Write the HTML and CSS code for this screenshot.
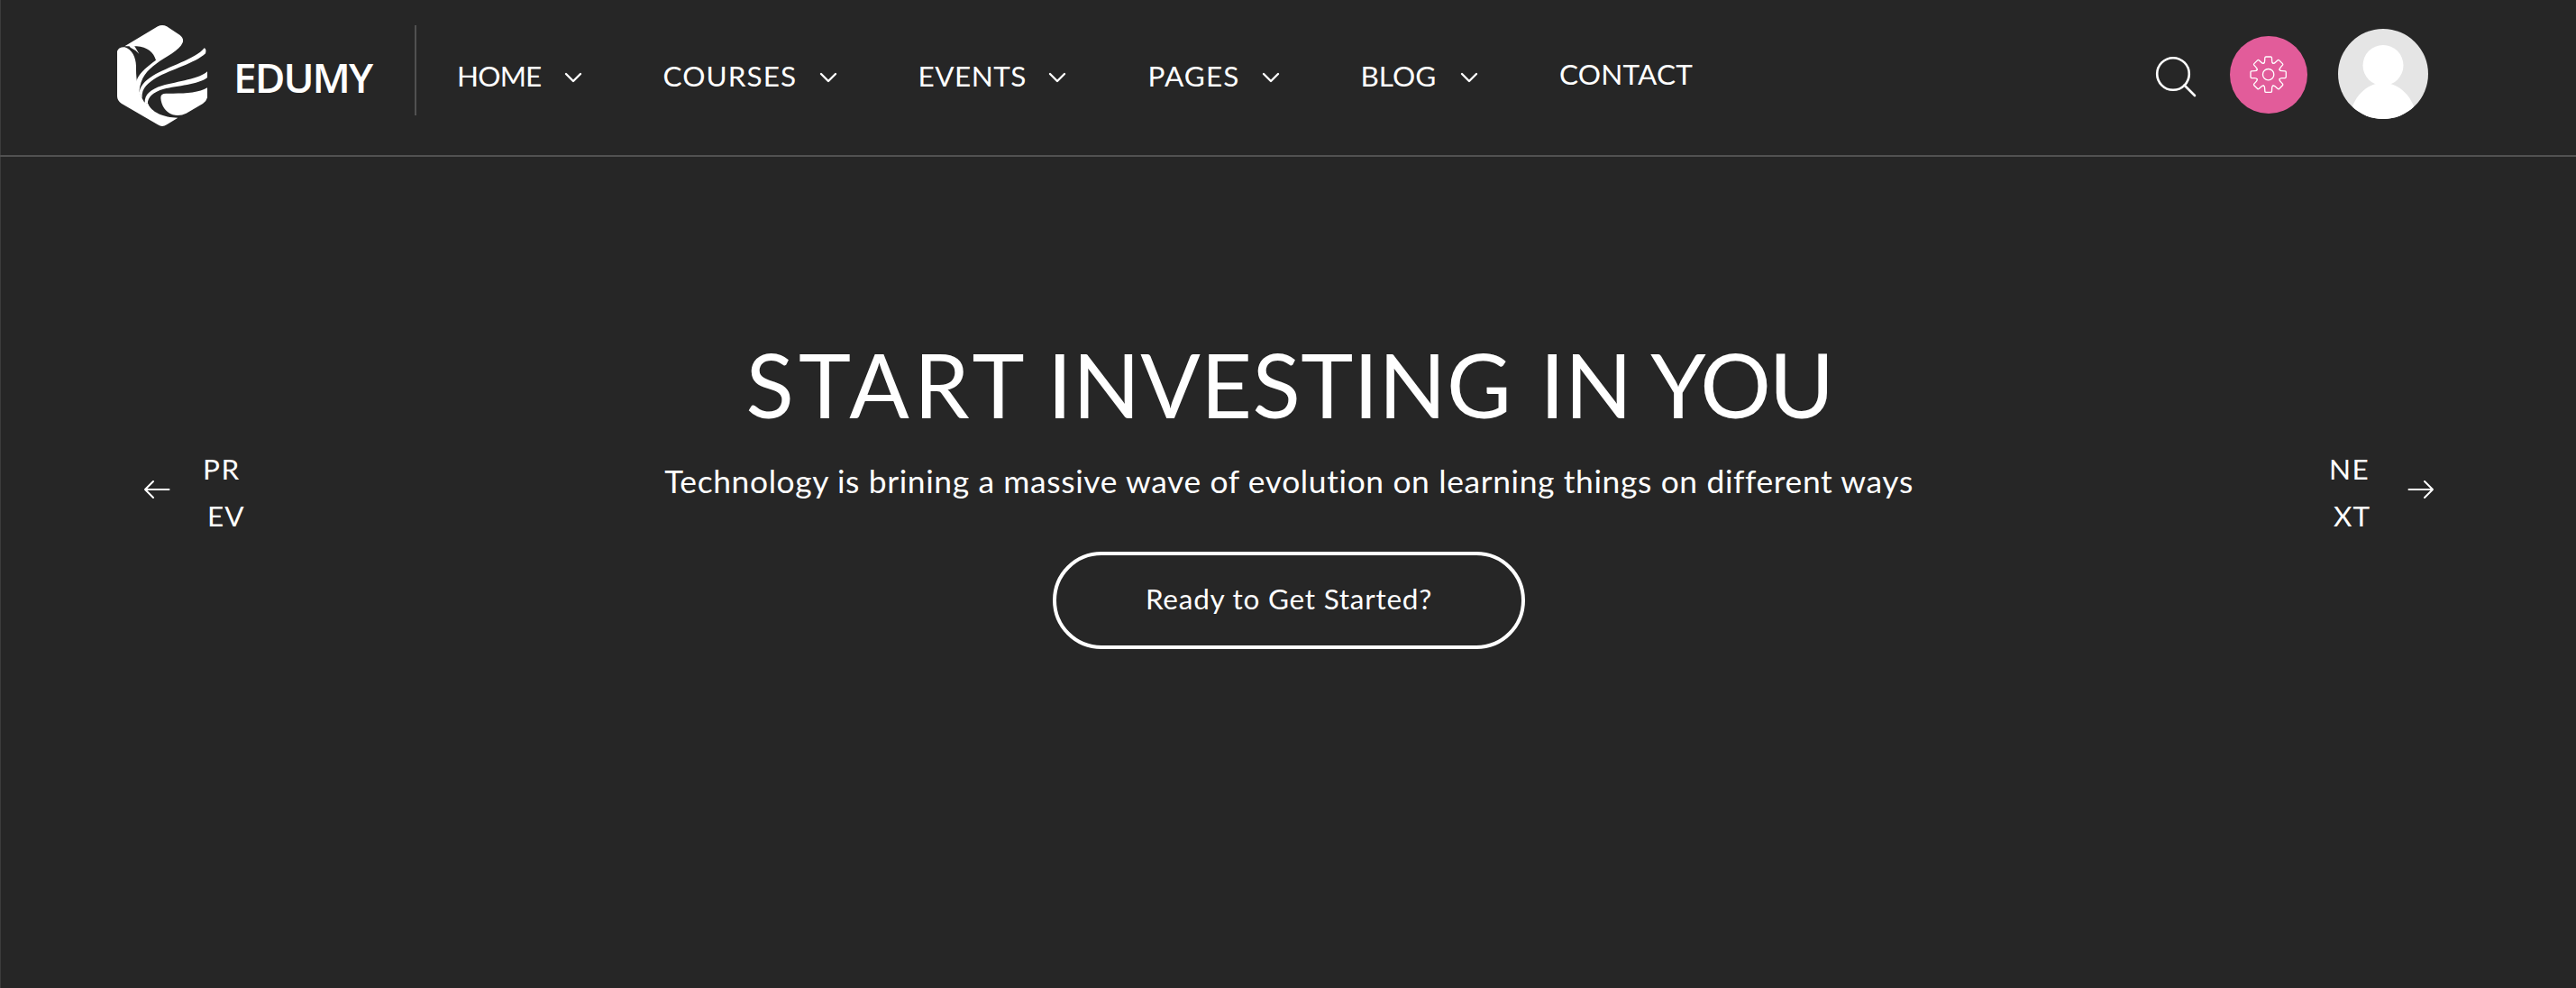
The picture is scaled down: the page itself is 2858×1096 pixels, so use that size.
FILE: index.html
```
<!DOCTYPE html>
<html lang="en">
<head>
<meta charset="utf-8">
<title>Edumy</title>
<link rel="stylesheet" href="styles.css">
</head>
<body>
<svg class="defs" aria-hidden="true">
  <symbol id="chevron" viewBox="0 0 20 12"><path d="M2 2l8 8 8-8"/></symbol>
  <symbol id="arrow" viewBox="0 0 30 22"><path d="M28.500 11H2M11 2l-9 9 9 9"/></symbol>
</svg>
<header class="header">
  <a class="brand">
    <svg class="logo" viewBox="60 54 300 336">
      <path d="M85 124L195 58Q210 50 225 58L268 86Q283 97 278 112C268 138 220 160 190 182C160 204 138 226 133 276C124 262 122 245 127 232C136 210 165 188 189 170C182 146 160 125 125 124Z"/>
      <path d="M60 140Q66 126 85 127C110 135 122 160 123 190C122 240 130 276 150 310L163 315C172 342 215 362 262 362L225 385Q210 395 195 385L75 315Q60 305 60 290Z"/>
      <path d="M350 130C325 164 225 194 180 221C152 239 134 257 134 280L143 296C140 262 165 245 190 229C240 201 320 180 354 148Q358 133 350 130Z"/>
      <path d="M360 208C335 232 262 241 210 255C170 267 151 285 152 312L162 315C160 295 180 275 215 266C260 255 330 252 360 228Z"/>
      <path d="M205 296Q204 280 225 281C280 282 330 280 360 262V295Q358 305 345 315L290 347Q270 357 245 352C220 342 207 322 205 296Z"/>
      <path d="M98 120L118 124L133 149Q122 136 104 128Z"/>
    </svg>
    <span class="brand-name">EDUMY</span>
  </a>
  <nav class="nav">
    <a class="item home"><span class="label">HOME</span><svg class="chevron"><use href="#chevron"/></svg></a>
    <a class="item courses"><span class="label">COURSES</span><svg class="chevron"><use href="#chevron"/></svg></a>
    <a class="item events"><span class="label">EVENTS</span><svg class="chevron"><use href="#chevron"/></svg></a>
    <a class="item pages"><span class="label">PAGES</span><svg class="chevron"><use href="#chevron"/></svg></a>
    <a class="item blog"><span class="label">BLOG</span><svg class="chevron"><use href="#chevron"/></svg></a>
    <a class="item contact"><span class="label">CONTACT</span></a>
  </nav>
  <div class="tools">
    <svg class="search" viewBox="0 0 46 46"><circle cx="20" cy="20" r="17.800"/><path d="M32.500 32.500L44 44"/></svg>
    <span class="settings">
      <svg class="gear" viewBox="-62 -62 124 124">
        <defs><path id="tooth" d="M-15.500 -37.400Q-11.800 -39 -12 -46L-11.500 -56Q-11 -59 -8 -59H8Q11 -59 11.500 -56L12 -46Q11.800 -39 15.500 -37.400"/></defs>
        <use href="#tooth"/>
        <use href="#tooth" transform="rotate(45)"/>
        <use href="#tooth" transform="rotate(90)"/>
        <use href="#tooth" transform="rotate(135)"/>
        <use href="#tooth" transform="rotate(180)"/>
        <use href="#tooth" transform="rotate(225)"/>
        <use href="#tooth" transform="rotate(270)"/>
        <use href="#tooth" transform="rotate(315)"/>
        <circle r="18.500"/>
      </svg>
    </span>
    <svg class="avatar" viewBox="0 0 100 100">
      <rect width="100" height="100" fill="#e5e5e5"/>
      <circle cx="50" cy="40.500" r="22.500"/>
      <path d="M12 100C16 75 32 60 50 60S84 75 88 100Z"/>
    </svg>
  </div>
</header>
<main class="slider">
  <a class="control prev">
    <svg class="arrow"><use href="#arrow"/></svg>
    <span class="control-text"><span>PR</span><span class="second">EV</span></span>
  </a>
  <section class="slide">
    <h1 class="title"><span class="start">START</span> <span class="investing">INVESTING</span> <span class="in">IN</span> <span class="you">YOU</span></h1>
    <p class="subtitle">Technology is brining a massive wave of evolution on learning things on different ways</p>
    <a class="button">Ready to Get Started?</a>
  </section>
  <a class="control next">
    <span class="control-text"><span>NE</span><span class="second">XT</span></span>
    <svg class="arrow"><use href="#arrow"/></svg>
  </a>
</main>
</body>
</html>
```
FILE: styles.css
```
* {
  box-sizing: border-box;
}

body {
  margin: 0;
  height: 1096px;
  display: flex;
  flex-direction: column;
  overflow: hidden;
  background: #262626;
  box-shadow: inset 1px 0 #3c3c3c;
  color: #fff;
  font-family: Lato, "Liberation Sans", sans-serif;
  font-size: 31.5px;
}

svg {
  display: block;
  flex: none;
  fill: #fff;
}

.defs {
  position: absolute;
  width: 0;
  height: 0;
}

.header {
  display: flex;
  align-items: flex-start;
  height: 174px;
  flex: none;
  padding: 28px 164px 0 130px;
  border-bottom: 2px solid #515151;
}

.brand {
  display: flex;
  width: 332px;
  height: 100px;
  border-right: 2px solid #515151;
}

.logo {
  width: 100px;
  height: 112px;
}

.brand-name {
  margin: 27px 0 0 29px;
  font: 600 46px/60px "Open Sans", sans-serif;
  letter-spacing: -2px;
}

.nav {
  display: flex;
  padding: 35.500px 0 0 45px;
  line-height: 40px;
}

.item {
  display: flex;
}

.chevron {
  width: 20px;
  height: 12px;
  margin-top: 16px;
}

.chevron,
.arrow,
.search,
.gear {
  fill: none;
  stroke: #fff;
  stroke-linecap: round;
  stroke-linejoin: round;
}

.chevron {
  stroke-width: 2.4;
}

.home { width: 228.500px; letter-spacing: -0.8px; }
.home .label { width: 118.500px; }
.courses { width: 283px; letter-spacing: 1.1px; }
.courses .label { width: 173px; }
.events { width: 255px; letter-spacing: 0.5px; }
.events .label { width: 144.500px; }
.pages { width: 236px; letter-spacing: 1.1px; }
.pages .label { width: 126px; }
.blog { width: 220.500px; }
.blog .label { width: 110px; }
.contact { margin-top: -2px; letter-spacing: 0.2px; }

.tools {
  display: flex;
  margin-left: auto;
}

.search {
  width: 46px;
  height: 46px;
  margin: 34px 37px 0 0;
  stroke-width: 2.6;
}

.settings {
  display: grid;
  place-items: center;
  width: 86px;
  height: 86px;
  margin: 12px 34px 0 0;
  border-radius: 50%;
  background: #e25c9a;
}

.gear {
  width: 41.300px;
  height: 41.300px;
  stroke-width: 4;
}

.avatar {
  width: 100px;
  height: 100px;
  margin-top: 4px;
  border-radius: 50%;
}

.slider {
  display: flex;
  justify-content: space-between;
  flex: 1;
  padding: 192px 157px 0 159px;
}

.control {
  display: flex;
  width: 120px;
  padding-top: 127.500px;
  line-height: 52px;
  letter-spacing: 1.5px;
}

.control-text {
  display: flex;
  flex-direction: column;
}

.second {
  padding-left: 5px;
  letter-spacing: 1px;
}

.arrow {
  width: 30px;
  height: 22px;
  margin-top: 38px;
  stroke-width: 2;
}

.prev {
  gap: 36px;
}

.next {
  justify-content: flex-end;
  gap: 41px;
}

.next .arrow {
  transform: scaleX(-1);
}

.slide {
  display: flex;
  flex-direction: column;
  align-items: center;
  text-align: center;
}

.title {
  margin: 0;
  font-size: 98.300px;
  font-weight: 400;
  line-height: 120px;
  white-space: nowrap;
}

.start { letter-spacing: 5.200px; }
.investing { margin-left: -5px; letter-spacing: 0.4px; }
.in { margin-left: 6px; }
.you { margin-left: -5px; letter-spacing: -2.400px; }

.subtitle {
  margin: 26px 0 56px;
  font-size: 35.400px;
  line-height: 44px;
  letter-spacing: 0.63px;
}

.button {
  width: 524px;
  height: 108px;
  border: 4px solid #fff;
  border-radius: 54px;
  line-height: 96px;
  letter-spacing: 0.75px;
}
```
